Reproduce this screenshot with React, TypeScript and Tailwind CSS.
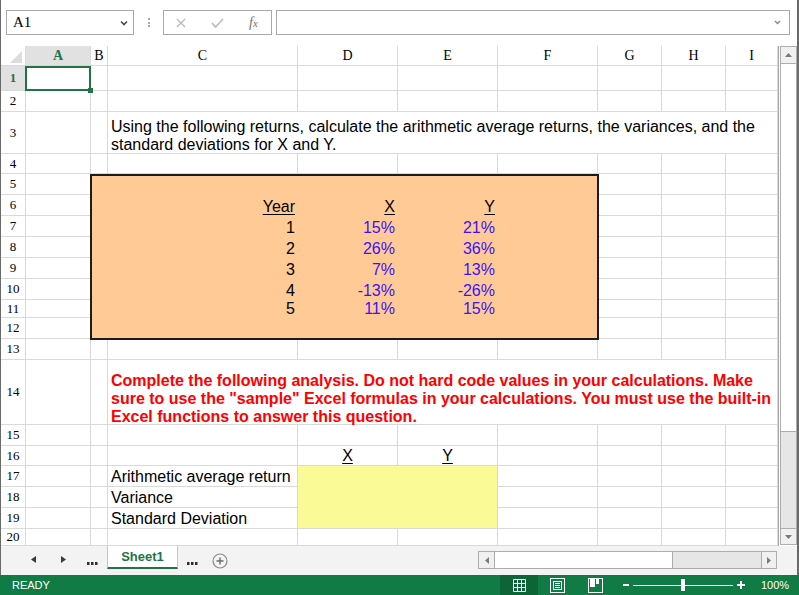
import React from "react";

const COLS = ["A", "B", "C", "D", "E", "F", "G", "H", "I"];
const ROWS = Array.from({ length: 20 }, (_, i) => i + 1);

const GRID = "border-r border-b border-[#d9d9d9]";
const BLUE = "text-[#3d12f7]";

const DATA = [
  { year: "1", x: "15%", y: "21%" },
  { year: "2", x: "26%", y: "36%" },
  { year: "3", x: "7%", y: "13%" },
  { year: "4", x: "-13%", y: "-26%" },
  { year: "5", x: "11%", y: "15%" },
];

const LABELS: Record<number, string> = {
  17: "Arithmetic average return",
  18: "Variance",
  19: "Standard Deviation",
};

// cells hidden under a merged / filled block (c: 0 = A)
const isCovered = (r: number, c: number) => {
  if ((r === 3 || r === 14) && c >= 3) return true;
  if (r >= 5 && r <= 12 && c >= 1 && c <= 5 && !(r === 5 && c === 1)) return true;
  if (r >= 17 && r <= 19 && c >= 3 && c <= 4 && !(r === 17 && c === 3)) return true;
  return false;
};

const ReturnsBox = () => (
  <div className="col-span-5 row-span-8 relative z-10 -ml-px -mr-px -mb-px border-2 border-[#1c1c1c] bg-[#ffca96] grid grid-cols-[16px_190px_100px_100px_1fr] grid-rows-[19px_21px_21px_21px_21px_21px_18px_1fr] text-[16px] leading-[18px]">
    <div className="col-span-5" />
    <div />
    <div className="flex items-end justify-end pr-[3px]"><span className="underline underline-offset-2">Year</span></div>
    <div className="flex items-end justify-end pr-[3px]"><span className="underline underline-offset-2">X</span></div>
    <div className="flex items-end justify-end pr-[3px]"><span className="underline underline-offset-2">Y</span></div>
    <div />
    {DATA.map((d) => (
      <React.Fragment key={d.year}>
        <div />
        <div className="flex items-end justify-end pr-[3px]">{d.year}</div>
        <div className={"flex items-end justify-end pr-[3px] " + BLUE}>{d.x}</div>
        <div className={"flex items-end justify-end pr-[3px] " + BLUE}>{d.y}</div>
        <div />
      </React.Fragment>
    ))}
  </div>
);

const renderCell = (r: number, c: number) => {
  const key = `${r}-${c}`;
  if (r === 1 && c === 0) {
    return (
      <div key={key} className={"relative " + GRID}>
        <div className="absolute -left-px top-0 -right-px -bottom-px border-2 border-[#217346] z-20" />
        <div className="absolute -right-[3px] -bottom-[3px] w-[5px] h-[5px] bg-[#217346] z-20" />
      </div>
    );
  }
  if (r === 3 && c === 2) {
    return (
      <div key={key} className={"col-span-7 flex flex-col justify-end pl-[3px] text-[16px] leading-[18px] whitespace-nowrap " + GRID}>
        <div className="translate-y-px flex flex-col">
          <span>Using the following returns, calculate the arithmetic average returns, the variances, and the</span>
          <span>standard deviations for X and Y.</span>
        </div>
      </div>
    );
  }
  if (r === 14 && c === 2) {
    return (
      <div key={key} className={"col-span-7 flex flex-col justify-end pl-[3px] text-[16px] leading-[18px] font-bold text-[#ff0000] whitespace-nowrap " + GRID}>
        <div className="translate-y-[2px] flex flex-col">
          <span>Complete the following analysis. Do not hard code values in your calculations. Make</span>
          <span>sure to use the "sample" Excel formulas in your calculations. You must use the built-in</span>
          <span>Excel functions to answer this question.</span>
        </div>
      </div>
    );
  }
  if (r === 5 && c === 1) return <ReturnsBox key={key} />;
  if (r === 17 && c === 3) {
    return <div key={key} className={"col-span-2 row-span-3 bg-[#fafa96] " + GRID} />;
  }
  if (r === 16 && (c === 3 || c === 4)) {
    return (
      <div key={key} className={"flex items-end justify-center text-[16px] leading-[18px] " + GRID}>
        <span className="underline underline-offset-2">{c === 3 ? "X" : "Y"}</span>
      </div>
    );
  }
  if (LABELS[r] && c === 2) {
    return (
      <div key={key} className={"flex items-end pl-[3px] text-[16px] leading-[18px] whitespace-nowrap " + GRID}>
        {LABELS[r]}
      </div>
    );
  }
  return <div key={key} className={GRID} />;
};

const Sheet = () => (
  <div className="grid grid-cols-[25px_65px_17px_190px_100px_100px_100px_64px_64px_52px] grid-rows-[20px_25px_21px_42px_20px_21px_21px_21px_21px_21px_21px_18px_21px_21px_65px_21px_20px_21px_21px_21px_17px] w-[777px] h-[500px]">
    <div className={"flex items-end justify-end pr-[3px] pb-[2px] " + GRID}>
      <svg width="12" height="12" viewBox="0 0 12 12">
        <path d="M12 0V12H0z" fill="#dcdcdc" />
      </svg>
    </div>
    {COLS.map((col, i) => (
      <div
        key={col}
        className={
          "flex items-center justify-center text-[14px] font-['Liberation_Serif',serif] " +
          GRID +
          (i === 0 ? " bg-[#e1e1e1] text-[#217346] font-bold" : " bg-white text-black")
        }
      >
        {col}
      </div>
    ))}
    {ROWS.map((r) => (
      <React.Fragment key={r}>
        <div
          className={
            "flex items-center justify-center text-[13px] font-['Liberation_Serif',serif] " +
            GRID +
            (r === 1 ? " bg-[#e1e1e1] text-[#217346] font-bold" : " bg-white text-black")
          }
        >
          {r}
        </div>
        {COLS.map((_, c) => (isCovered(r, c) ? null : renderCell(r, c)))}
      </React.Fragment>
    ))}
  </div>
);

const VScroll = () => (
  <div className="w-[19px] h-[500px] border-l border-[#a8a8a8] pl-px flex flex-col bg-white">
    <div className="w-[17px] h-[18px] border border-[#adadad] bg-[#f0f0f0] flex items-center justify-center">
      <svg width="7" height="4" viewBox="0 0 7 4"><path d="M0 4L3.5 0L7 4z" fill="#7a7a7a" /></svg>
    </div>
    <div className="w-[17px] h-[368px] border border-t-0 border-[#adadad] bg-white" />
    <div className="w-[17px] flex-1 bg-[#e6e6e6] border-x border-[#adadad]" />
    <div className="w-[17px] h-[17px] mb-px border border-[#adadad] bg-[#f0f0f0] flex items-center justify-center">
      <svg width="7" height="4" viewBox="0 0 7 4"><path d="M0 0L3.5 4L7 0z" fill="#7a7a7a" /></svg>
    </div>
  </div>
);

const FormulaBar = () => (
  <div className="h-[46px] flex items-start pt-[10px] pl-[5px] bg-white">
    <div className="w-[128px] h-[25px] border border-[#a9a9a9] flex items-center pl-[6px] pr-[5px]">
      <span className="font-['Liberation_Serif',serif] text-[15px] leading-none">A1</span>
      <svg className="ml-auto" width="8" height="6" viewBox="0 0 8 6">
        <path d="M1 1.5l3 3 3-3" stroke="#4a4a4a" strokeWidth="1.6" fill="none" />
      </svg>
    </div>
    <div className="w-[29px] h-[25px] flex flex-col items-center justify-center gap-[1.5px]">
      <div className="w-[2px] h-[2px] bg-[#a8a8a8]" />
      <div className="w-[2px] h-[2px] bg-[#a8a8a8]" />
      <div className="w-[2px] h-[2px] bg-[#a8a8a8]" />
    </div>
    <div className="w-[109px] h-[25px] border border-[#a9a9a9] flex items-center pl-[12px]">
      <svg width="10" height="10" viewBox="0 0 10 10">
        <path d="M1 1l8 8M9 1l-8 8" stroke="#b8b8b8" strokeWidth="1.3" />
      </svg>
      <svg className="ml-[25px]" width="13" height="10" viewBox="0 0 13 10">
        <path d="M1 5l3.5 4L12 1" stroke="#bdbdbd" strokeWidth="1.8" fill="none" />
      </svg>
      <span className="ml-[25px] font-['Liberation_Serif',serif] italic text-[14px] leading-none text-[#727272]">
        f<span className="text-[11px]">x</span>
      </span>
    </div>
    <div className="ml-[4px] w-[514px] h-[25px] border border-[#a9a9a9] flex items-center justify-end pr-[8px]">
      <svg width="7" height="5" viewBox="0 0 7 5">
        <path d="M1 1l2.5 2.5L6 1" stroke="#8a8a8a" strokeWidth="1.5" fill="none" />
      </svg>
    </div>
  </div>
);

const Dots = () => (
  <svg width="11" height="3" viewBox="0 0 11 3">
    <rect x="0" y="0" width="2.5" height="3" fill="#2f2f2f" />
    <rect x="4" y="0" width="2.5" height="3" fill="#2f2f2f" />
    <rect x="8" y="0" width="2.5" height="3" fill="#2f2f2f" />
  </svg>
);

const TabBar = () => (
  <div className="h-[29px] bg-[#f3f3f3] flex items-center">
    <svg className="ml-[30px] mt-[-2px]" width="5" height="7" viewBox="0 0 5 7"><path d="M5 0V7L0 3.5z" fill="#3a3a3a" /></svg>
    <svg className="ml-[25px] mt-[-2px]" width="5" height="7" viewBox="0 0 5 7"><path d="M0 0V7L5 3.5z" fill="#3a3a3a" /></svg>
    <div className="ml-[21px] mt-[5px]"><Dots /></div>
    <div className="ml-[9px] self-start w-[71px] h-[23px] bg-white border-x border-[#c6c6c6] border-b-2 border-b-[#217346] flex items-center justify-center text-[13px] font-bold text-[#217346]">
      Sheet1
    </div>
    <div className="ml-[9px] mt-[5px]"><Dots /></div>
    <svg className="ml-[14px]" width="16" height="16" viewBox="0 0 16 16">
      <circle cx="8" cy="8" r="7" stroke="#8a8a8a" strokeWidth="1.2" fill="none" />
      <path d="M8 4.5v7M4.5 8h7" stroke="#6a6a6a" strokeWidth="1.4" />
    </svg>
    <div className="ml-auto mr-[20px] mt-[-1px] w-[299px] h-[18px] flex">
      <div className="w-[17px] h-full border border-[#adadad] bg-[#f0f0f0] flex items-center justify-center">
        <svg width="4" height="7" viewBox="0 0 4 7"><path d="M4 0V7L0 3.5z" fill="#7a7a7a" /></svg>
      </div>
      <div className="w-[178px] h-full border border-l-0 border-[#adadad] bg-white" />
      <div className="flex-1 h-full bg-[#e6e6e6] border-y border-[#adadad]" />
      <div className="w-[16px] h-full border border-[#adadad] bg-[#f0f0f0] flex items-center justify-center">
        <svg width="4" height="7" viewBox="0 0 4 7"><path d="M0 0V7L4 3.5z" fill="#7a7a7a" /></svg>
      </div>
    </div>
  </div>
);

const StatusBar = () => (
  <div className="h-[20px] bg-[#107b45] flex items-center text-white text-[11px]">
    <div className="w-[500px] pl-[12px] leading-none">READY</div>
    <div className="w-[38px] h-full bg-[#0c6437] flex items-center justify-center">
      <svg width="13" height="13" viewBox="0 0 13 13">
        <path d="M0.5 0.5h12v12h-12zM4.5 0.5v12M8.5 0.5v12M0.5 4.5h12M0.5 8.5h12" stroke="white" fill="none" />
      </svg>
    </div>
    <svg className="ml-[12px]" width="15" height="15" viewBox="0 0 15 15">
      <rect x="0.5" y="0.5" width="14" height="14" stroke="white" fill="none" />
      <rect x="3.5" y="3.5" width="8" height="8" stroke="white" fill="none" />
      <path d="M5 5.5h5M5 7.5h5M5 9.5h5" stroke="white" />
    </svg>
    <svg className="ml-[23px]" width="15" height="15" viewBox="0 0 15 15">
      <rect x="0.5" y="0.5" width="14" height="14" stroke="white" fill="none" />
      <rect x="2" y="1" width="5" height="8" fill="white" />
      <rect x="8" y="1" width="3" height="5" fill="white" />
    </svg>
    <div className="ml-[20px] w-[6px] h-[2px] bg-white" />
    <div className="ml-[4px] w-[100px] h-px bg-white relative flex items-center">
      <div className="absolute left-[48px] w-[4px] h-[12px] bg-white" />
    </div>
    <svg className="ml-[4px]" width="8" height="8" viewBox="0 0 8 8">
      <path d="M4 0v8M0 4h8" stroke="white" strokeWidth="2" />
    </svg>
    <div className="ml-[16px] leading-none">100%</div>
  </div>
);

export default function App() {
  return (
    <div className="w-[799px] h-[595px] overflow-hidden bg-white flex flex-col font-['Liberation_Sans',Arial,sans-serif] text-black">
      <div className="flex-1 min-h-0 flex flex-col border-l border-r-2 border-[#6a6a6a]">
        <FormulaBar />
        <div className="flex">
          <Sheet />
          <VScroll />
        </div>
        <TabBar />
      </div>
      <StatusBar />
    </div>
  );
}
